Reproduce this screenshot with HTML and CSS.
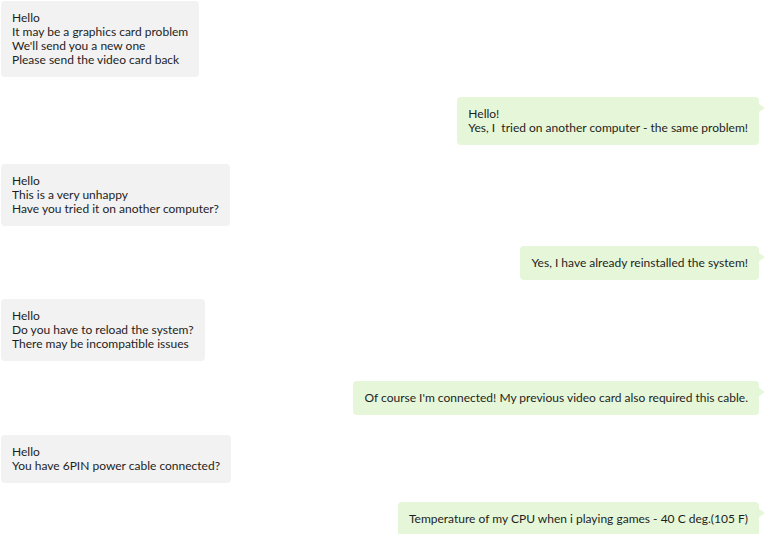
FILE: index.html
```html
<!DOCTYPE html>
<html lang="en">

<head>
  <meta charset="UTF-8">
  <meta name="viewport" content="width=device-width, initial-scale=1.0">
  <title>Support chat</title>

  <link rel="stylesheet" href="styles.css">
</head>

<body>
  <main class="chat">
    <div class="msg msg-in">
      Hello<br>
      It may be a graphics card problem<br>
      We'll send you a new one<br>
      Please send the video card back
    </div>

    <div class="msg msg-out">
      Hello!<br>
      Yes, I &nbsp;tried on another computer - the same problem!
    </div>

    <div class="msg msg-in">
      Hello<br>
      This is a very unhappy<br>
      Have you tried it on another computer?
    </div>

    <div class="msg msg-out">
      Yes, I have already reinstalled the system!
    </div>

    <div class="msg msg-in">
      Hello<br>
      Do you have to reload the system?<br>
      There may be incompatible issues
    </div>

    <div class="msg msg-out">
      Of course I'm connected! My previous video card also required this cable.
    </div>

    <div class="msg msg-in">
      Hello<br>
      You have 6PIN power cable connected?
    </div>

    <div class="msg msg-out">
      Temperature of my CPU when i playing games - 40 C deg.(105 F)
    </div>
  </main>
</body>

</html>
```

FILE: styles.css
```css
html {
  overflow: hidden;
}

body {
  background: #fff;
  color: #1e1e1e;
  font-family: Lato, "Open Sans", sans-serif;
  font-size: 12px;
  line-height: 14px;
  margin: 0;
}

.chat {
  display: flex;
  flex-direction: column;
  gap: 19.6px;
  padding: 1px 7px 0 1px;
}

.msg {
  border-radius: 4px;
  padding: 10px 11px;
  position: relative;
}

.msg-in {
  align-self: flex-start;
  background: #f2f2f2;
}

.msg-out {
  align-self: flex-end;
  background: #e6f7d9;
}

/* little tail on the right side of my own messages */
.msg-out::after {
  border-bottom: 4px solid transparent;
  border-left: 6px solid #e6f7d9;
  border-top: 4px solid transparent;
  content: "";
  position: absolute;
  right: -6px;
  top: 7px;
}
```
